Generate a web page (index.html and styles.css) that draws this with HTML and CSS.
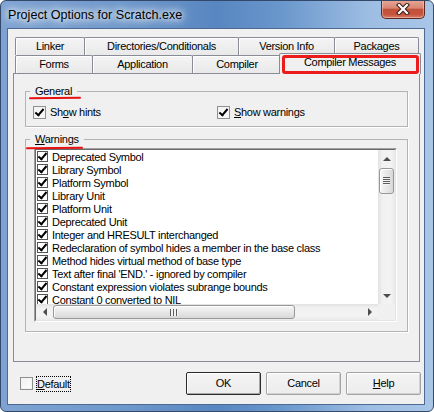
FILE: index.html
```html
<!DOCTYPE html>
<html lang="en">
<head>
<meta charset="UTF-8">
<title>Project Options for Scratch.exe</title>
<link rel="stylesheet" href="styles.css">
</head>
<body>
<div class="window">
  <div class="titlebar">
    <span class="title">Project Options for Scratch.exe</span>
    <div class="close">
      <svg width="14" height="12" viewBox="0 0 14 12">
        <path d="M3 2 L11 10 M11 2 L3 10" stroke="#3a1a14" stroke-width="4.2" stroke-linecap="square"/>
        <path d="M3 2 L11 10 M11 2 L3 10" stroke="#fff" stroke-width="2.2" stroke-linecap="square"/>
      </svg>
    </div>
  </div>

  <div class="client">
    <div class="tabrow">
      <div class="tab" style="width:70px">Linker</div>
      <div class="tab" style="width:155px">Directories/Conditionals</div>
      <div class="tab" style="width:97px">Version Info</div>
      <div class="tab" style="width:85px">Packages</div>
    </div>
    <div class="tabrow">
      <div class="tab" style="width:78px">Forms</div>
      <div class="tab" style="width:101px">Application</div>
      <div class="tab" style="width:90px">Compiler</div>
      <div class="tab active" style="width:142px">Compiler Messages</div>
    </div>

    <div class="panel">
      <fieldset class="group">
        <legend>General<span class="mark"></span></legend>
        <div class="opts">
          <label class="opt first"><span class="chk on"></span><span>Sh<u>o</u>w hints</span></label>
          <label class="opt"><span class="chk on"></span><span><u>S</u>how warnings</span></label>
        </div>
      </fieldset>

      <fieldset class="group warnings">
        <legend><u>W</u>arnings<span class="mark wide"></span></legend>
        <div class="list">
          <div class="listin">
            <div class="items">
              <div class="item"><span class="box"></span>Deprecated Symbol</div>
              <div class="item"><span class="box"></span>Library Symbol</div>
              <div class="item"><span class="box"></span>Platform Symbol</div>
              <div class="item"><span class="box"></span>Library Unit</div>
              <div class="item"><span class="box"></span>Platform Unit</div>
              <div class="item"><span class="box"></span>Deprecated Unit</div>
              <div class="item"><span class="box"></span>Integer and HRESULT interchanged</div>
              <div class="item"><span class="box"></span>Redeclaration of symbol hides a member in the base class</div>
              <div class="item"><span class="box"></span>Method hides virtual method of base type</div>
              <div class="item"><span class="box"></span>Text after final 'END.' - ignored by compiler</div>
              <div class="item"><span class="box"></span>Constant expression violates subrange bounds</div>
              <div class="item"><span class="box"></span>Constant 0 converted to NIL</div>
            </div>
            <div class="vscroll">
              <div class="arrow"><span class="tri up"></span></div>
              <div class="thumb-v"><span class="grip"></span></div>
              <div class="arrow end"><span class="tri down"></span></div>
            </div>
            <div class="hscroll">
              <div class="arrow"><span class="tri left"></span></div>
              <div class="thumb-h"><span class="grip-h"></span></div>
              <div class="arrow end"><span class="tri right"></span></div>
            </div>
            <div class="corner"></div>
          </div>
        </div>
      </fieldset>
    </div>

    <div class="bottom">
      <label class="opt"><span class="chk"></span><span class="focus"><u>D</u>efault</span></label>
      <div class="buttons">
        <div class="btn primary">OK</div>
        <div class="btn">Cancel</div>
        <div class="btn"><u>H</u>elp</div>
      </div>
    </div>
  </div>
</div>
</body>
</html>
```

FILE: styles.css
```css
* { box-sizing: border-box; }
body { margin: 0; font-family: "Liberation Sans", Arial, sans-serif; font-size: 11px; letter-spacing: -0.3px; color: #000; background: #fff; }
u { text-decoration: underline; text-underline-offset: 1px; }

.window { width: 434px; height: 412px; border: 1px solid #34496a; border-radius: 6px; padding: 0 8px 6px 6px; display: flex; flex-direction: column; overflow: hidden;
  background: linear-gradient(to right, #7ea3d2 0%, #6d97cb 30%, #5886c0 50%, #6a97cc 65%, #9dbde3 85%, #a9c6e7 100%); }

.titlebar { height: 27px; display: flex; justify-content: space-between; align-items: flex-start; }
.title { margin: 7px 0 0 1px; font-size: 12.6px; line-height: 14px; letter-spacing: 0; color: #000;
  text-shadow: 0 0 6px #fff, 0 0 10px #fff, 0 0 14px rgba(255,255,255,.9); }
.close { width: 44px; height: 19px; margin-top: -1px; border: 1px solid #5a2a22; border-top: none; border-radius: 0 0 5px 5px; display: flex; align-items: center; justify-content: center;
  background: linear-gradient(#e8a898, #d88672 45%, #c1513b 52%, #c7533c 80%, #d9806a 100%); box-shadow: inset 0 0 0 1px rgba(255,220,210,.45); }

.client { flex: 1; border: 1px solid #4d6a92; background: #f0f0f0; padding-top: 8px; display: flex; flex-direction: column; }

.tabrow { display: flex; height: 18px; margin-left: 7px; }
.tab { height: 18px; border: 1px solid #898c95; border-bottom: none; border-radius: 2px 2px 0 0; text-align: center; line-height: 17px; white-space: nowrap;
  background: linear-gradient(#f4f4f4, #e9e9e9); box-shadow: inset 1px 1px 0 #fff; }
.tab + .tab { margin-left: -1px; }
.tab.active { height: 21px; margin-top: -2px; margin-left: -3px; position: relative; z-index: 2; background: #f0f0f0; box-shadow: none; }
.tab.active::after { content: ""; position: absolute; left: 2px; top: 1px; right: 1px; bottom: 0; border: 3px solid #ec1c1c; border-radius: 3px; }

.panel { height: 289px; margin: 0 4px 0 5px; border: 1px solid #898c95; padding: 11px 11px 0; background: #f0f0f0; }

.group { margin: 0; padding: 0; min-width: 0; border: 1px solid #b4b4b4; box-shadow: 1px 1px 0 #fff; }
.group legend { margin-left: 4px; padding: 0 5px; line-height: 13px; position: relative; }
.mark { position: absolute; left: -1px; top: 12px; width: 52px; height: 2px; border-radius: 2px; background: #e81010; transform: rotate(-0.6deg); }
.mark.wide { left: -4px; top: 14px; width: 57px; }

.opts { display: flex; padding: 8px 0 7px 7px; }
.opt { display: flex; align-items: center; gap: 4px; line-height: 13px; }
.opt.first { width: 184px; }
.chk { width: 13px; height: 13px; border: 1px solid #8e8f8f; background: linear-gradient(135deg, #f0f0f0, #fff); position: relative; box-shadow: inset 0 0 0 1px #f4f4f4; }
.chk.on::after, .box::after { content: ""; position: absolute; left: 3px; top: 0; width: 3px; height: 7px; border: solid #000; border-width: 0 2px 2px 0; transform: rotate(40deg); }

.warnings { margin-top: 6px; }
.list { margin: 2px 10px 9px 8px; height: 174px; border: 1px solid; border-color: #a0a0a0 #fff #fff #a0a0a0; }
.listin { height: 100%; border: 1px solid; border-color: #696969 #e3e3e3 #e3e3e3 #696969; background: #fff; display: grid; grid-template-columns: 1fr 17px; grid-template-rows: 1fr 16px; }
.items { overflow: hidden; padding-left: 1px; }
.item { height: 13px; display: flex; align-items: center; gap: 4px; white-space: nowrap; }
.box { width: 11px; height: 11px; border: 1px solid #555; background: #fff; position: relative; flex: none; }
.box::after { left: 2px; top: -1px; height: 7px; }

.vscroll { display: flex; flex-direction: column; background: linear-gradient(to right, #e2e2e2, #f1f1f1 25%, #f3f3f3 75%, #eaeaea); }
.hscroll { display: flex; background: linear-gradient(#e2e2e2, #f1f1f1 25%, #f3f3f3 75%, #eaeaea); }
.arrow { width: 17px; height: 17px; display: flex; align-items: center; justify-content: center; flex: none; }
.hscroll .arrow { height: 16px; }
.vscroll .end { margin-top: auto; }
.hscroll .end { margin-left: auto; }
.tri { width: 0; height: 0; border: 4px solid transparent; }
.tri.up { border-bottom-color: #4d4d4d; border-top-width: 0; }
.tri.down { border-top-color: #4d4d4d; border-bottom-width: 0; }
.tri.left { border-right-color: #4d4d4d; border-left-width: 0; }
.tri.right { border-left-color: #4d4d4d; border-right-width: 0; }
.thumb-v { height: 26px; margin: 1px 1px 0; border: 1px solid #979797; border-radius: 3px; display: flex; align-items: center; justify-content: center;
  background: linear-gradient(to right, #f6f6f6, #e8e8e8 50%, #d8d8d8); box-shadow: inset 1px 1px 0 #fff; }
.grip { width: 7px; height: 8px; background: repeating-linear-gradient(#5c5c5c 0 1px, #f4f4f4 1px 2px); }
.thumb-h { width: 242px; height: 14px; margin-top: 1px; border: 1px solid #979797; border-radius: 3px; display: flex; align-items: center; justify-content: center;
  background: linear-gradient(#f6f6f6, #e8e8e8 50%, #d8d8d8); box-shadow: inset 1px 1px 0 #fff; }
.grip-h { width: 8px; height: 7px; background: repeating-linear-gradient(to right, #5c5c5c 0 1px, #f4f4f4 1px 3px); }
.corner { background: #f0f0f0; }

.bottom { display: flex; align-items: center; height: 23px; margin-top: 10px; padding: 0 3px 0 12px; }
.bottom .opt { gap: 3px; }
.focus { border: 1px dotted #000; line-height: 14px; }
.buttons { margin-left: auto; display: flex; gap: 5px; }
.btn { width: 75px; height: 23px; border: 1px solid #a3a3a3; border-radius: 2px; text-align: center; line-height: 21px; background: linear-gradient(#f4f4f4, #ececec);
  box-shadow: inset 1px 1px 0 #fff, inset -1px -1px 0 #d2d2d2; }
.btn.primary { border-color: #2a2a2a; box-shadow: inset 1px 1px 0 #fff, inset -1px -1px 0 #a8a8a8; }
```
